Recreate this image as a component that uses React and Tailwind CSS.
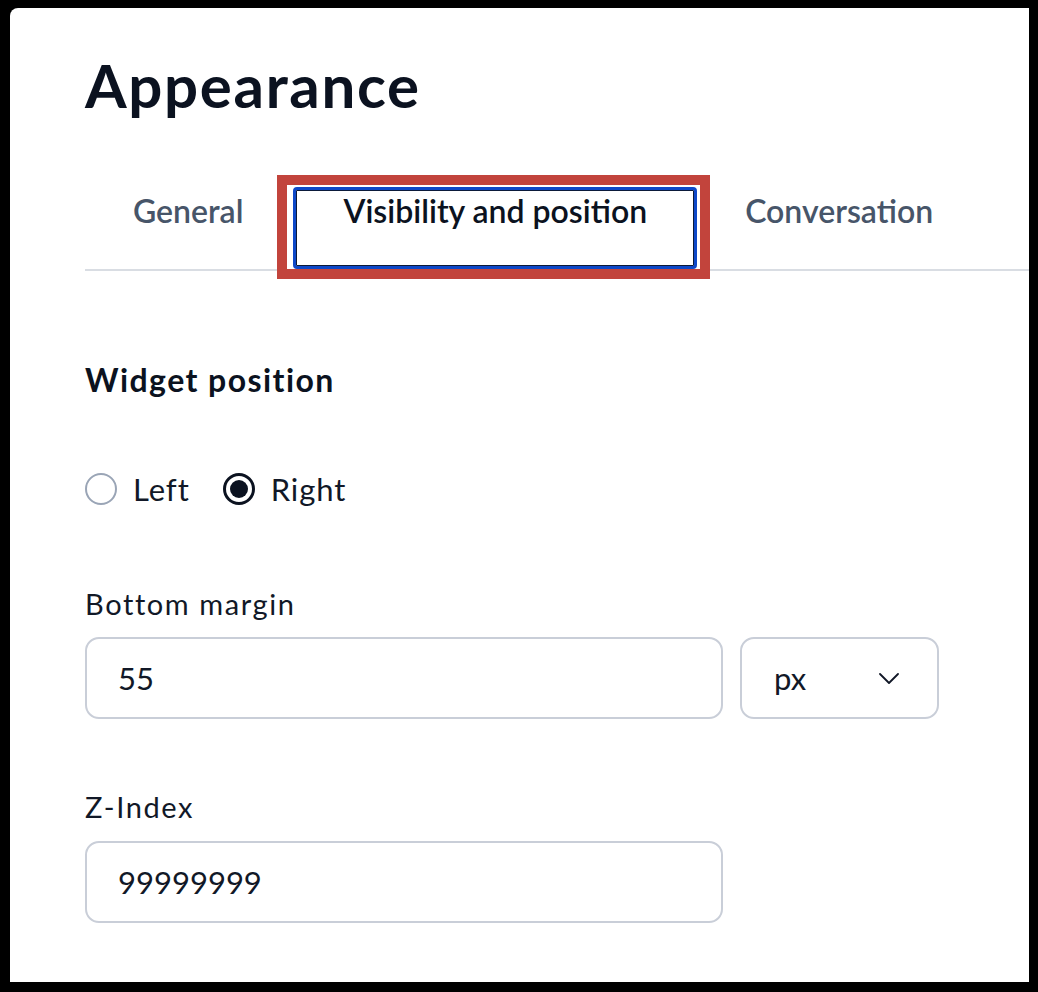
import React from "react";

const FONT = { fontFamily: "Lato, 'Noto Sans', sans-serif" };

function Radio({ checked, label }) {
  return (
    <label className="flex items-center gap-[16px]">
      {checked ? (
        <span className="flex h-[32px] w-[32px] items-center justify-center rounded-full border-[3px] border-[#0b1220]">
          <span className="h-[18px] w-[18px] rounded-full bg-[#0b1220]" />
        </span>
      ) : (
        <span className="h-[32px] w-[32px] rounded-full border-2 border-[#9aa5b6]" />
      )}
      <span className="text-[31px] leading-[32px] tracking-[0.03em] text-[#111827]">{label}</span>
    </label>
  );
}

export default function App() {
  return (
    <div className="min-h-screen bg-black pt-[8px] pl-[10px] pr-[9px] pb-[10px]" style={FONT}>
      <div className="h-[974px] overflow-hidden rounded-tl-lg bg-white pt-[47px] pl-[75px]">
        <h1 className="text-[60px] font-bold leading-[60px] tracking-[0.028em] text-[#0b1220]">Appearance</h1>

        <div className="mt-[72px] flex border-b-2 border-[#d9dde3]">
          <div className="h-[82px] pl-[48px] pr-[50px] pt-[8px] text-[32px] font-semibold leading-[32px] text-[#475569]">
            General
          </div>
          <div className="relative">
            <div className="h-[82px] rounded-[4px] border-[3px] border-[#0e48c8] px-[47px] pt-[5px] text-[32px] font-semibold leading-[32px] text-[#0b1220] shadow-[inset_0_0_0_1px_#0b1a3a]">
              Visibility and position
            </div>
            <div className="pointer-events-none absolute -left-[16px] -right-[13px] -top-[12px] -bottom-[10px] border-[10px] border-[#c2443c]" />
          </div>
          <div className="h-[82px] px-[48px] pt-[8px] text-[32px] font-semibold leading-[32px] text-[#475569]">
            Conversation
          </div>
        </div>

        <h2 className="mt-[93px] text-[32px] font-bold leading-[32px] tracking-[0.045em] text-[#0b1220]">Widget position</h2>

        <div className="mt-[77px] flex items-center gap-[33px]">
          <Radio label="Left" />
          <Radio checked label="Right" />
        </div>

        <div className="mt-[85px] text-[29px] leading-[28px] tracking-[0.055em] text-[#111827]">Bottom margin</div>
        <div className="mt-[19px] flex gap-[17px]">
          <div className="flex h-[82px] w-[638px] items-center rounded-[14px] border-2 border-[#c9ced8] pl-[31px] text-[31px] text-[#111827]">
            55
          </div>
          <div className="flex h-[82px] w-[199px] items-center justify-between rounded-[14px] border-2 border-[#c9ced8] pl-[32px] pr-[38px] text-[31px] text-[#111827]">
            <span>px</span>
            <svg width="20" height="11" viewBox="0 0 20 11" fill="none">
              <path d="M1 1l9 9 9-9" stroke="#111827" strokeWidth="1.8" strokeLinecap="round" strokeLinejoin="round" />
            </svg>
          </div>
        </div>

        <div className="mt-[74px] text-[29px] leading-[28px] tracking-[0.055em] text-[#111827]">Z-Index</div>
        <div className="mt-[20px] flex h-[82px] w-[638px] items-center rounded-[14px] border-2 border-[#c9ced8] pl-[31px] text-[31px] text-[#111827]">
          99999999
        </div>
      </div>
    </div>
  );
}
